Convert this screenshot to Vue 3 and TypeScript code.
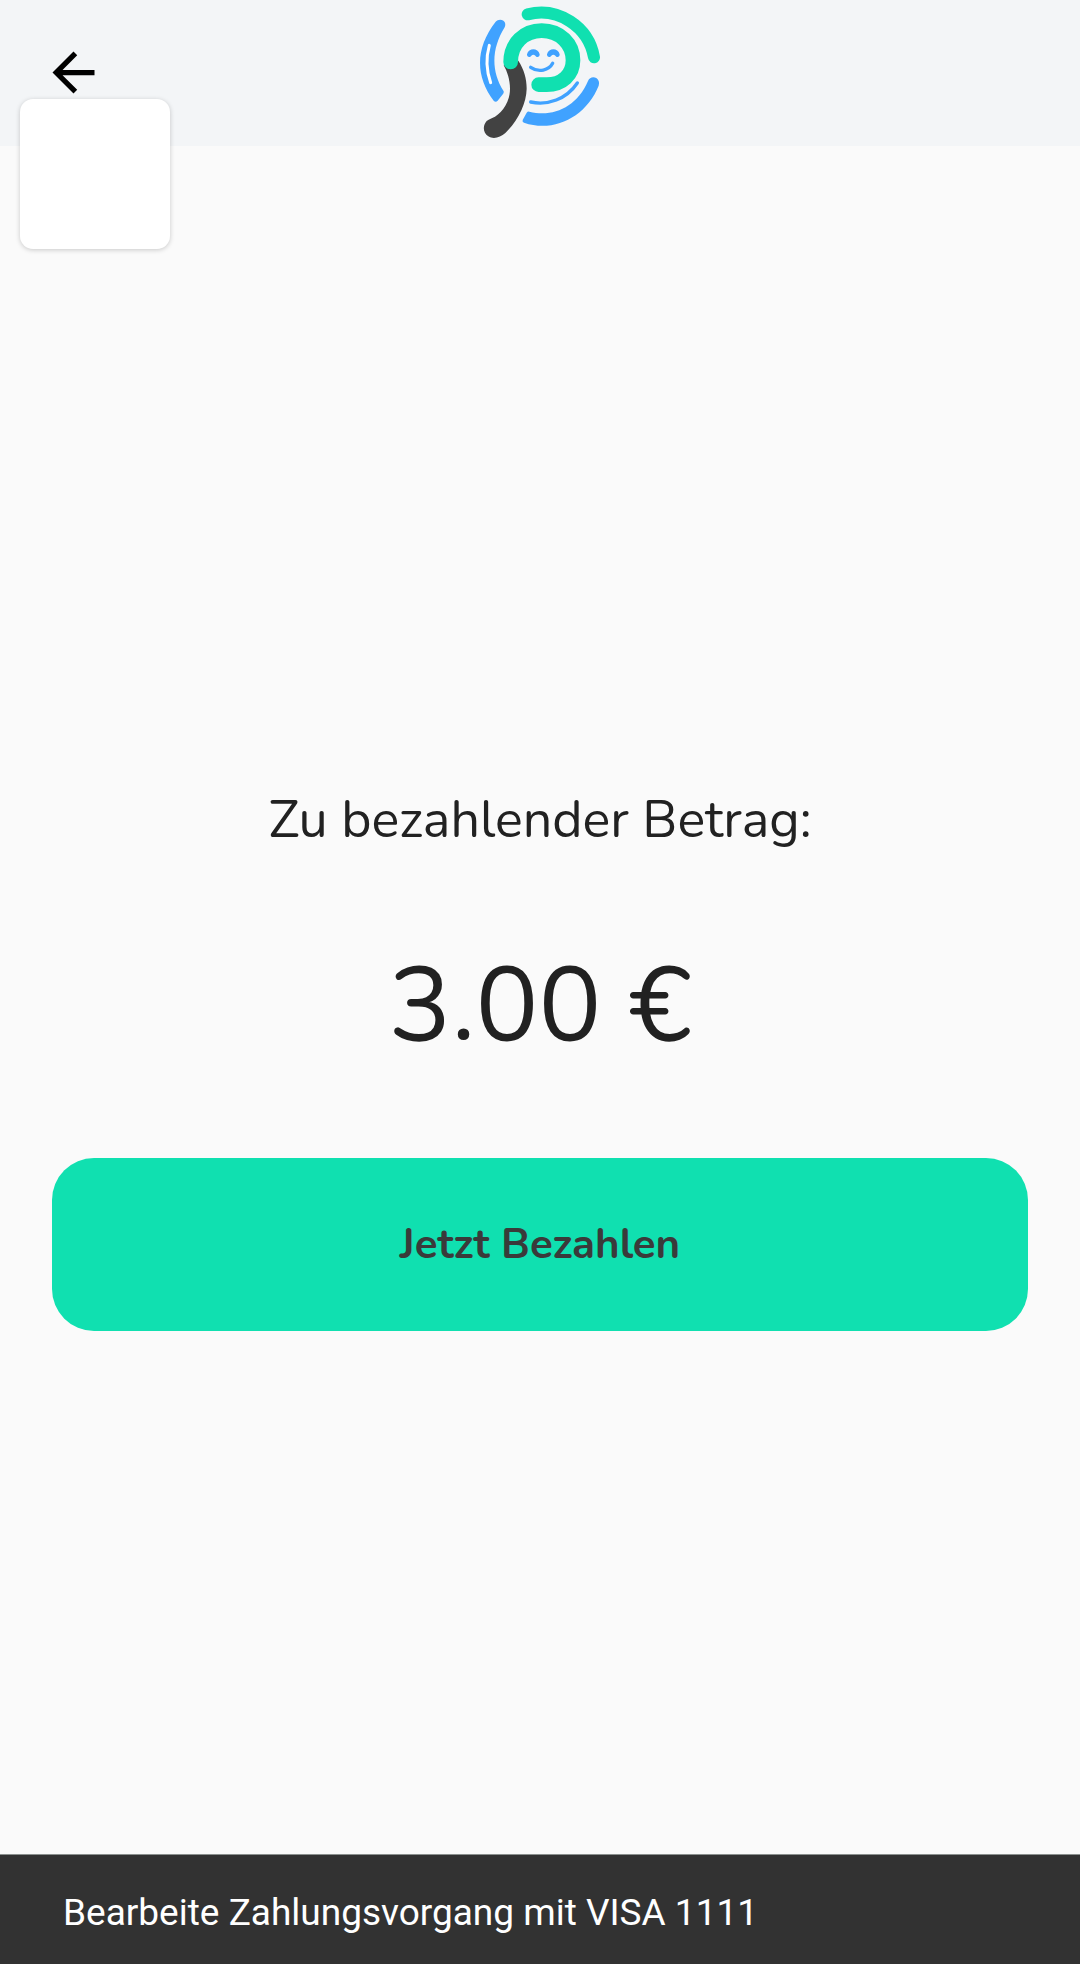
<script setup lang="ts">
import { computed, ref } from 'vue'

const amount = ref(3)
const card = ref('VISA 1111')

const formattedAmount = computed(() => `${amount.value.toFixed(2)} €`)
const status = computed(() => `Bearbeite Zahlungsvorgang mit ${card.value}`)
</script>

<template>
  <div class="screen">
    <header class="bar">
      <button class="back" type="button" aria-label="Zurück">
        <svg viewBox="0 0 24 24" aria-hidden="true">
          <path d="M20 11H7.83l5.59-5.59L12 4l-8 8 8 8 1.41-1.41L7.83 13H20v-2z" />
        </svg>
      </button>
      <svg class="logo" viewBox="60 18 360 402" fill="none" stroke-linecap="round" aria-hidden="true">
        <path class="green" stroke-width="36" d="M203 43A162 162 0 0 1 402 172" />
        <path
          class="blue-fill"
          d="M107 65C114 56 131 57 135 68Q137 75 134 82C97 142 90 209 131 274Q132 278 129 282L113 302Q107 308 101 302C46 229 45 145 107 65Z"
        />
        <path class="white" stroke-width="9" d="M88 136Q72 192 92 248" />
        <path
          class="blue-fill"
          d="M200 338Q203 334 208 335C278 352 349 324 384 243C389 232 400 229 410 235Q420 243 416 257C378 351 282 399 192 368Q186 366 188 360Z"
        />
        <path class="blue" stroke-width="10" d="M212 306C263 317 319 298 352 249" />
        <path
          class="dark-fill"
          d="M131 196L175 182C192 209 200 235 200 266C199 311 174 362 136 399C121 412 101 419 85 409C69 399 67 377 80 363C88 356 96 355 105 350C129 334 150 304 150 266C150 240 142 215 131 196Z"
        />
        <path class="green" stroke-width="44" d="M152 186C152 130 193 92 245 92C300 92 339 132 339 181C339 224 307 254 260 254H236" />
        <path
          class="blue-fill"
          d="M201 163C206 143 234 143 239 163C240 171 230 174 226 167Q220 161 214 167C210 174 200 171 201 163ZM261 163C266 143 294 143 299 163C300 171 290 174 286 167Q280 161 274 167C270 174 260 171 261 163Z"
        />
        <path class="blue" stroke-width="10" d="M212 202C236 219 267 211 278 190" />
      </svg>
    </header>

    <div class="tile"></div>

    <main class="content">
      <h1 class="label">Zu bezahlender Betrag:</h1>
      <p class="amount">{{ formattedAmount }}</p>
      <button class="pay" type="button">Jetzt Bezahlen</button>
    </main>

    <div class="snackbar" role="status">{{ status }}</div>
  </div>
</template>

<style>
body {
  margin: 0;
  background: #fafafa;
}
</style>

<style scoped>
.screen {
  position: relative;
  display: flex;
  flex-direction: column;
  min-height: 100vh;
  box-sizing: border-box;
  background: #fafafa;
  color: #212121;
  font-family: Nunito, Lato, sans-serif;
}

.bar {
  display: grid;
  grid-template-columns: 1fr auto 1fr;
  align-items: center;
  height: 146px;
  padding: 0 42px;
  background: #f3f5f7;
}

.back {
  display: block;
  width: 63px;
  height: 64px;
  padding: 0 0 1px;
  border: 0;
  background: none;
  cursor: pointer;
}

.back svg {
  display: block;
  width: 100%;
  height: 100%;
}

.logo {
  display: block;
  width: 120px;
  height: 134px;
}

.green {
  stroke: #10e0b0;
}

.blue {
  stroke: #40a2ff;
}

.white {
  stroke: #ffffff;
}

.blue-fill {
  fill: #40a2ff;
}

.dark-fill {
  fill: #424242;
}

.tile {
  position: absolute;
  top: 99px;
  left: 20px;
  width: 150px;
  height: 150px;
  border-radius: 13px;
  background: #ffffff;
  box-shadow: 0 1px 5px rgba(0, 0, 0, 0.2);
}

.content {
  flex: 1;
  display: flex;
  flex-direction: column;
  justify-content: center;
  padding: 0 52px;
  text-align: center;
}

.label {
  margin: 0;
  font-size: 52px;
  font-weight: 400;
  line-height: 80px;
}

.amount {
  margin: 72px 0 78px;
  font-size: 105px;
  line-height: 148px;
}

.pay {
  padding: 50px;
  border: 0;
  border-radius: 42px;
  background: #10e0b0;
  color: #3a3a3a;
  font: inherit;
  font-size: 42px;
  font-weight: 700;
  line-height: 73px;
  cursor: pointer;
}

.snackbar {
  position: fixed;
  right: 0;
  bottom: 0;
  left: 0;
  padding: 35px 63px 29px;
  border-top: 1px solid #8b908e;
  background: #323232;
  color: #ffffff;
  font-family: Roboto, sans-serif;
  font-size: 37px;
  line-height: 45px;
}
</style>
